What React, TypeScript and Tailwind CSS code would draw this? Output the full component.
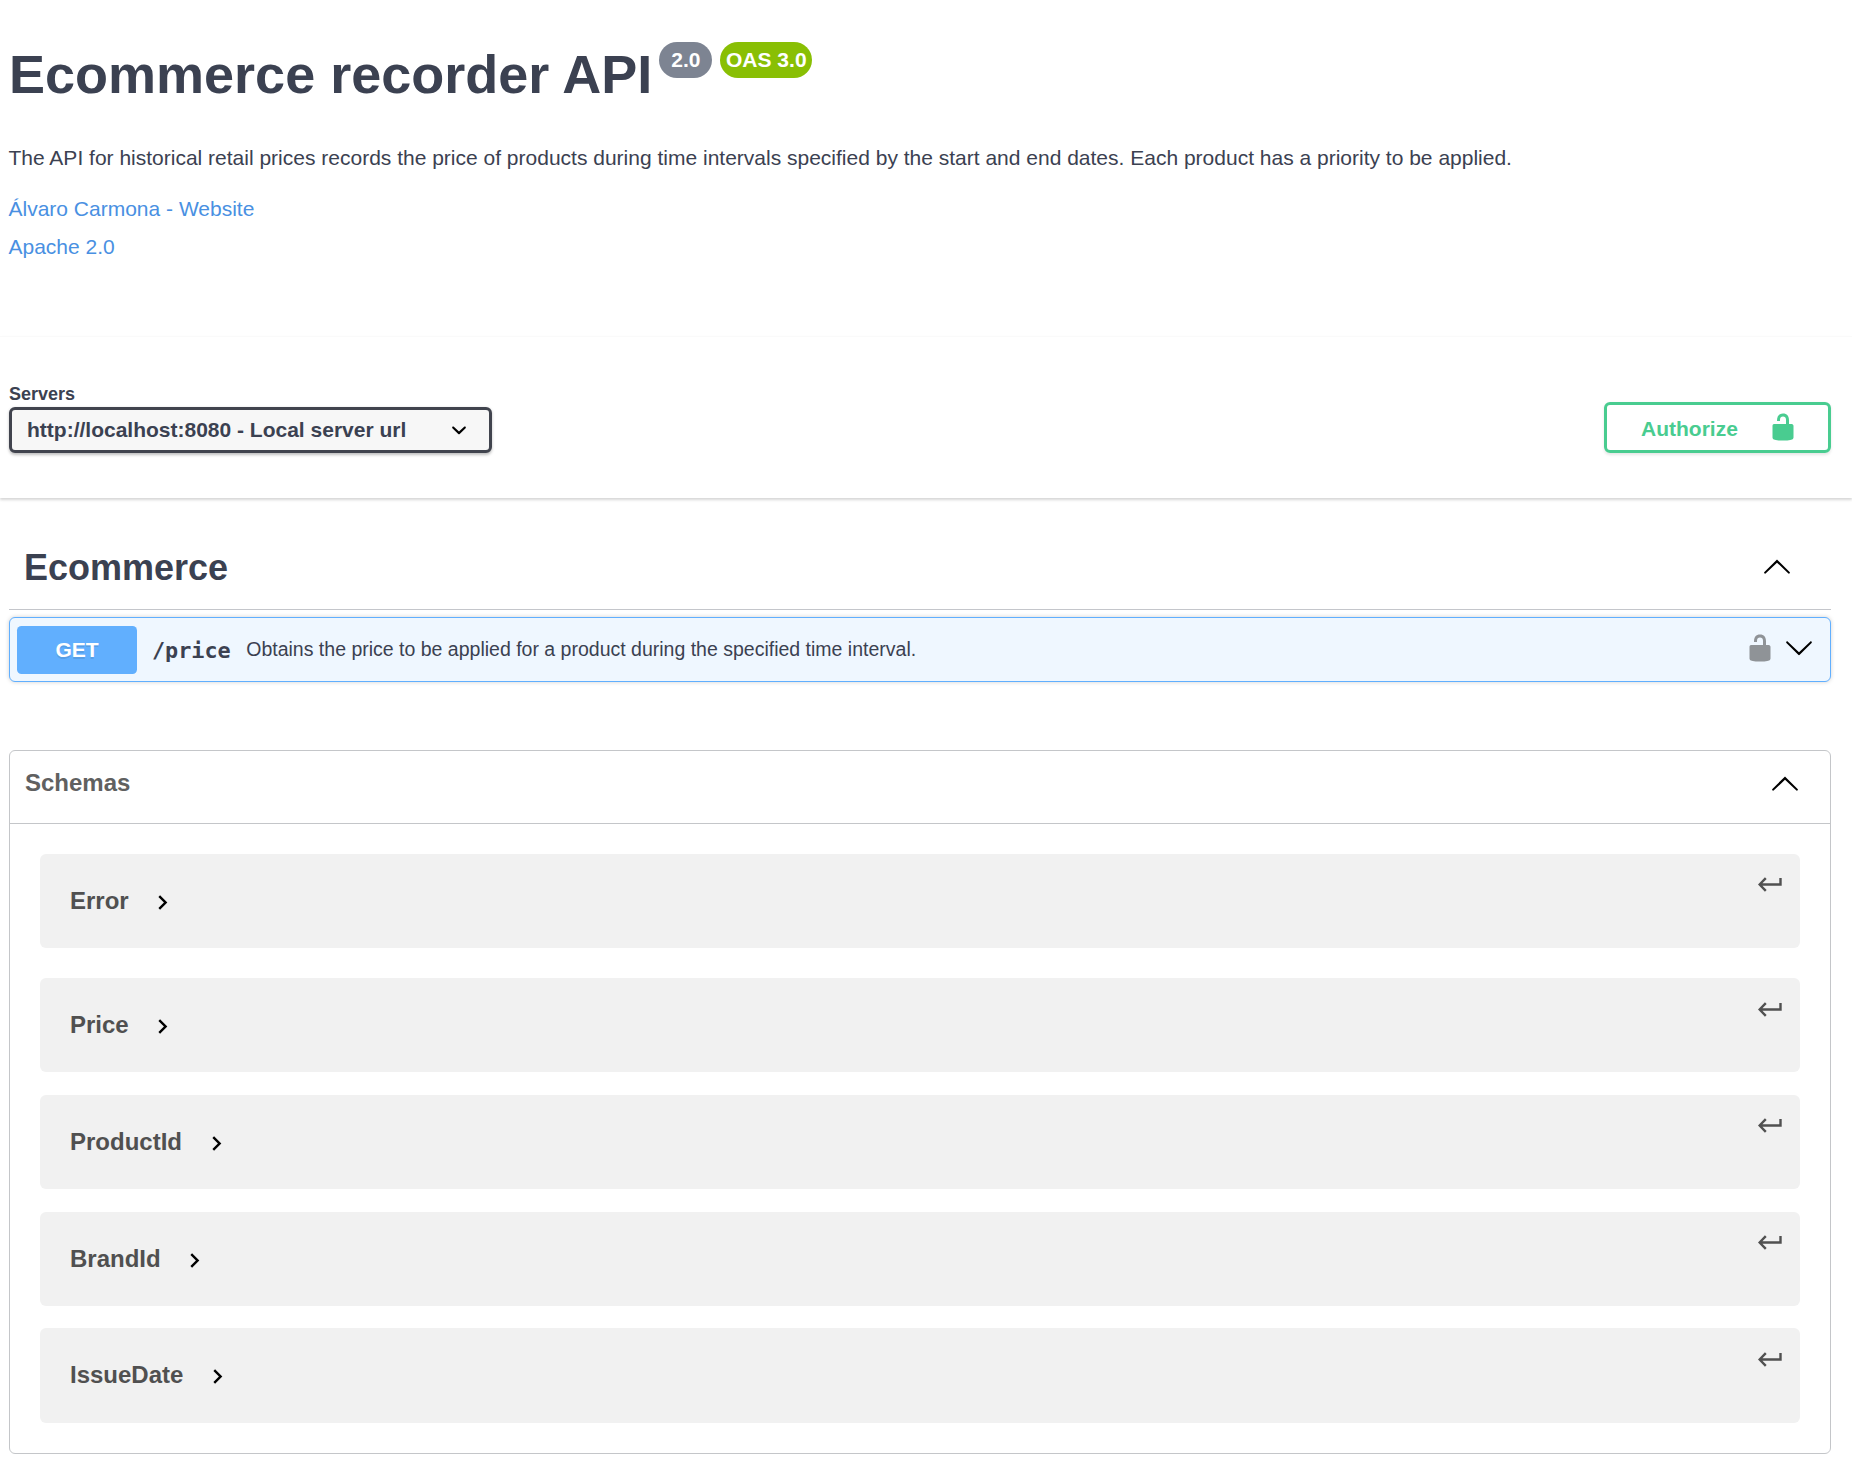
import React from "react";

const sans = "font-['Liberation_Sans',Arial,sans-serif]";

function LockOpen({ className }: { className: string }) {
  return (
    <svg viewBox="0 0 20 20" width="30" height="30" fill="currentColor" className={className}>
      <path d="M15.8 8H14V5.6C14 2.703 12.665 1 10 1 7.334 1 6 2.703 6 5.6V6h2v-.801C8 3.754 8.797 3 10 3c1.203 0 2 .754 2 2.199V8H4c-.553 0-1 .646-1 1.199V17c0 .549.428 1.139.951 1.307l1.197.387C5.672 18.861 6.55 19 7.1 19h5.8c.549 0 1.428-.139 1.951-.307l1.196-.387c.524-.167.953-.757.953-1.306V9.199C17 8.646 16.352 8 15.8 8z" />
    </svg>
  );
}

function LargeArrow({ className }: { className: string }) {
  return (
    <svg viewBox="0 0 20 20" width="30" height="30" fill="#000" className={className}>
      <path d="M17.418 14.908C17.69 15.176 18.127 15.176 18.397 14.908C18.667 14.64 18.668 14.207 18.397 13.939L10.489 6.109C10.219 5.841 9.782 5.841 9.51 6.109L1.602 13.939C1.332 14.207 1.332 14.64 1.602 14.908C1.873 15.176 2.311 15.176 2.581 14.908L10 7.767L17.418 14.908Z" />
    </svg>
  );
}

function SelectArrow() {
  return (
    <svg viewBox="0 0 20 20" width="30" height="30" fill="#000">
      <path d="M13.418 7.859c.271-.268.709-.268.978 0 .27.268.272.701 0 .969l-3.908 3.83c-.27.268-.707.268-.979 0l-3.908-3.83c-.27-.267-.27-.701 0-.969.271-.268.709-.268.978 0L10 11l3.418-3.141z" />
    </svg>
  );
}

function ChevronRight() {
  return (
    <svg viewBox="0 0 24 24" width="29" height="29" fill="#000" className="mt-[34px] ml-[19.5px]">
      <path d="M10 6L8.59 7.41 13.17 12l-4.58 4.59L10 18l6-6z" />
    </svg>
  );
}

function ReturnIcon({ className }: { className: string }) {
  return (
    <svg viewBox="0 0 24 15" width="24" height="15" fill="none" stroke="#505050" strokeWidth="2.4" className={className}>
      <path d="M22.5 1v6.5H1.8M7.8 1.1L1.6 7.5l6.2 6.4" />
    </svg>
  );
}

const models = [
  { name: "Error", box: "h-[94px]", icon: "mt-[23px]" },
  { name: "Price", box: "h-[94px] mt-[30px]", icon: "mt-[24px]" },
  { name: "ProductId", box: "h-[94px] mt-[23px]", icon: "mt-[23px]" },
  { name: "BrandId", box: "h-[94px] mt-[23px]", icon: "mt-[23px]" },
  { name: "IssueDate", box: "h-[95px] mt-[22px]", icon: "mt-[24px]" },
];

export default function App() {
  return (
    <div className={`h-[1465px] w-[1852px] overflow-hidden bg-white text-[#3b4151] ${sans}`}>
      <header className="h-[336px] px-[9px] pt-[42px]">
        <div className="flex items-start">
          <h1 className="mt-[1px] text-[54px] leading-[62px] font-bold whitespace-nowrap">Ecommerce recorder API</h1>
          <span className="ml-[7px] flex h-[36px] w-[53px] items-center justify-center rounded-full bg-[#7d8492] text-[21px] font-bold text-white">
            <span className="-mt-[1px]">2.0</span>
          </span>
          <span className="ml-[8px] flex h-[36px] w-[92px] items-center justify-center rounded-full bg-[#89bf04] text-[21px] font-bold whitespace-nowrap text-white">
            <span className="-mt-[1px]">OAS 3.0</span>
          </span>
        </div>
        <div className="-ml-[0.5px]">
          <p className="mt-[41px] text-[21px] leading-[24px] whitespace-nowrap">
            The API for historical retail prices records the price of products during time intervals specified by the start and end dates. Each product has a priority to be applied.
          </p>
          <a className="mt-[27px] block text-[21px] leading-[24px] text-[#4990e2]">Álvaro Carmona - Website</a>
          <a className="mt-[14px] block text-[21px] leading-[24px] text-[#4990e2]">Apache 2.0</a>
        </div>
      </header>

      <section className="flex h-[162px] items-start justify-between border-t border-[#fafafa] pr-[21px] pl-[9px] shadow-[0_2px_2.5px_rgba(0,0,0,0.16)]">
        <div className="pt-[47px]">
          <div className="text-[18px] leading-[20px] font-bold">Servers</div>
          <div className="mt-[3px] flex h-[46px] w-[483px] items-center justify-between rounded-[6px] border-[3px] border-[#41444e] bg-[#f7f7f7] px-[15px] shadow-[0_1.5px_3px_rgba(0,0,0,0.25)]">
            <span className="text-[21px] leading-[24px] font-bold whitespace-nowrap">http://localhost:8080 - Local server url</span>
            <SelectArrow />
          </div>
        </div>
        <button className="mt-[65px] flex h-[51px] w-[227px] items-start rounded-[6px] border-[3px] border-[#49cc90] pl-[34px] text-[#49cc90] shadow-[0_1.5px_3px_rgba(0,0,0,0.1)]">
          <span className="mt-[12px] text-[21px] leading-[24px] font-bold">Authorize</span>
          <LockOpen className="mt-[7px] ml-[30px]" />
        </button>
      </section>

      <main className="mr-[21px] ml-[9px]">
        <div className="flex h-[112px] items-start justify-between border-b border-[#c4c6cb] pr-[39px] pl-[15px]">
          <h2 className="mt-[49px] text-[36px] leading-[42px] font-bold">Ecommerce</h2>
          <LargeArrow className="mt-[53px]" />
        </div>

        <div className="mt-[7px] flex h-[65px] items-center rounded-[6px] border border-[#61affe] bg-[#eff7ff] pl-[7px] shadow-[0_0_4.5px_rgba(0,0,0,0.19)]">
          <span className="flex h-[48px] w-[120px] items-center justify-center rounded-[4.5px] bg-[#61affe] text-[21px] font-bold text-white [text-shadow:0_1.5px_0_rgba(0,0,0,0.1)]">
            GET
          </span>
          <span className="mt-[2px] ml-[15px] font-['DejaVu_Sans_Mono',monospace] text-[21.8px] leading-[26px] font-bold">/price</span>
          <span className="-mt-[2px] ml-[15.5px] text-[19.5px] leading-[24px] whitespace-nowrap">
            Obtains the price to be applied for a product during the specified time interval.
          </span>
          <LockOpen className="-mt-[3px] mr-[9px] ml-auto text-[#8f9397]" />
          <LargeArrow className="-mt-[1px] mr-[16px] rotate-180" />
        </div>

        <section className="mt-[68px] h-[704px] rounded-[6px] border border-[#c4c6c9]">
          <div className="flex h-[73px] items-start justify-between border-b border-[#c4c6c9] pr-[30px] pl-[15px]">
            <h3 className="mt-[18px] text-[24px] leading-[28px] font-bold text-[#606060]">Schemas</h3>
            <LargeArrow className="mt-[17px]" />
          </div>
          <div className="px-[30px] pt-[30px]">
            {models.map((m) => (
              <div key={m.name} className={`flex items-start rounded-[6px] bg-[#f1f1f1] pr-[18px] pl-[30px] ${m.box}`}>
                <span className="mt-[33px] text-[24px] leading-[28px] font-bold text-[#505050]">{m.name}</span>
                <ChevronRight />
                <ReturnIcon className={`ml-auto ${m.icon}`} />
              </div>
            ))}
          </div>
        </section>
      </main>
    </div>
  );
}
